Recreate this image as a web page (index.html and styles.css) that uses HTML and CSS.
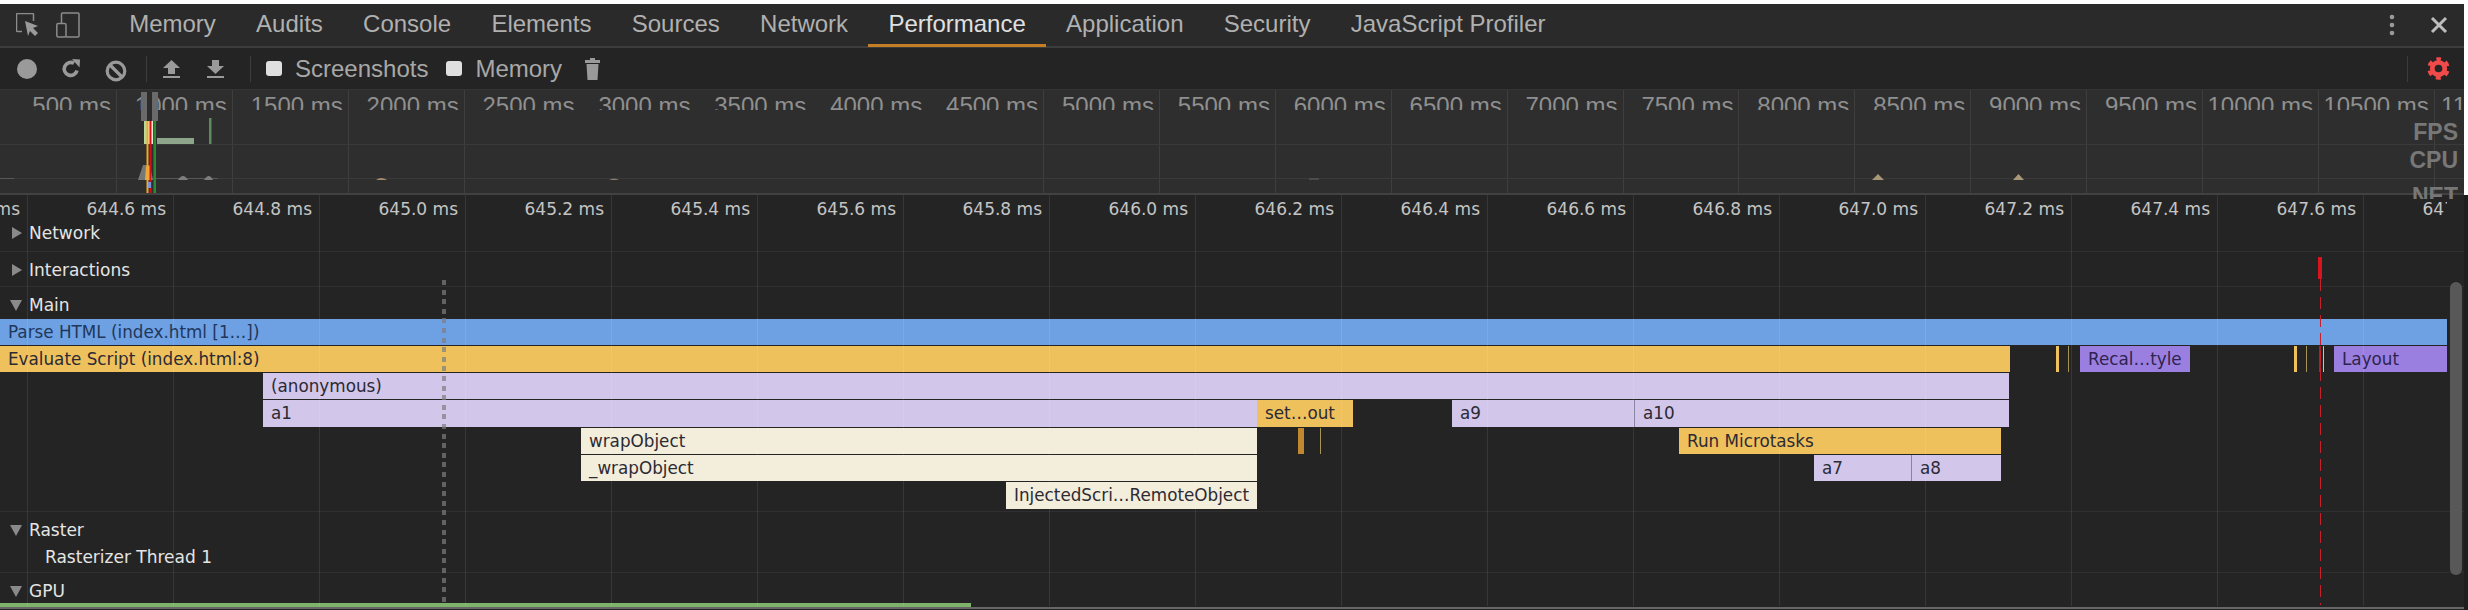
FILE: index.html
```html
<!DOCTYPE html>
<html lang="en">
<head>
    <meta charset="UTF-8">
    <title>DevTools Performance</title>
    <link rel="stylesheet" href="styles.css">
</head>
<body>
    <div class="tabbar">
        <svg class="icon-inspect" width="24" height="24" viewBox="0 0 24 24" fill="none" stroke="#8c8c8c" stroke-width="1.5">
            <path d="M6 18.5H1.5a1 1 0 0 1-1-1V1.5a1 1 0 0 1 1-1h15a1 1 0 0 1 1 1V8"></path>
            <path d="M9 8l13 5-5 2 5 5-3 3-5-5-2 5z" fill="#9a9a9a" stroke="none"></path>
        </svg>
        <svg class="icon-device" width="24" height="26" viewBox="0 0 24 26" fill="none" stroke="#8c8c8c" stroke-width="1.5">
            <path d="M5.5 11V2a1 1 0 0 1 1-1h15.500a1 1 0 0 1 1 1v22a1 1 0 0 1-1 1H10"></path>
            <rect x="0.8" y="11.500" width="9.200" height="13.500" rx="1.500"></rect>
        </svg>
        <div class="tab">Memory</div>
        <div class="tab">Audits</div>
        <div class="tab">Console</div>
        <div class="tab">Elements</div>
        <div class="tab">Sources</div>
        <div class="tab">Network</div>
        <div class="tab tab-active">Performance</div>
        <div class="tab">Application</div>
        <div class="tab">Security</div>
        <div class="tab">JavaScript Profiler</div>
        <svg class="icon-more" width="6" height="22" viewBox="0 0 6 22" fill="#9a9a9a">
            <circle cx="3" cy="3" r="2.300"></circle>
            <circle cx="3" cy="11" r="2.300"></circle>
            <circle cx="3" cy="19" r="2.300"></circle>
        </svg>
        <svg class="icon-close" width="18" height="18" viewBox="0 0 18 18" stroke="#bdbdbd" stroke-width="3">
            <line x1="2" y1="2" x2="16" y2="16"></line>
            <line x1="16" y1="2" x2="2" y2="16"></line>
        </svg>
    </div>

    <div class="toolbar">
        <svg class="btn-record" width="20" height="20" viewBox="0 0 20 20"><circle cx="10" cy="10" r="10" fill="#9a9a9a"></circle></svg>
        <svg class="btn-reload" width="20" height="20" viewBox="0 0 20 20" fill="none">
            <path d="M16 11.500A6.500 6.500 0 1 1 13 4.300" stroke="#9a9a9a" stroke-width="3.600"></path>
            <path d="M11 0l8 .5-.5 8z" fill="#9a9a9a"></path>
        </svg>
        <svg class="btn-clear" width="22" height="22" viewBox="0 0 22 22" fill="none" stroke="#9a9a9a" stroke-width="3.200">
            <circle cx="11" cy="11" r="8.800"></circle>
            <line x1="5" y1="5" x2="17" y2="17"></line>
        </svg>
        <div class="tool-sep sep-first"></div>
        <svg class="btn-load" width="17" height="18" viewBox="0 0 17 18" fill="#9a9a9a">
            <path d="M8.500 0L17 8h-5v6H5V8H0z"></path>
            <rect y="16" width="17" height="2"></rect>
        </svg>
        <svg class="btn-save" width="17" height="18" viewBox="0 0 17 18" fill="#9a9a9a">
            <path d="M8.500 14L17 6h-5V0H5v6H0z"></path>
            <rect y="16" width="17" height="2"></rect>
        </svg>
        <div class="tool-sep sep-second"></div>
        <span class="check check-first"></span>
        <span class="check-label">Screenshots</span>
        <span class="check check-second"></span>
        <span class="check-label">Memory</span>
        <svg class="btn-trash" width="15" height="22" viewBox="0 0 15 22" fill="#9a9a9a">
            <rect x="5" y="0" width="5" height="2"></rect>
            <rect x="0" y="2" width="15" height="3"></rect>
            <path d="M1.500 6h12L12.500 22h-10z"></path>
        </svg>
        <div class="tool-sep sep-right"></div>
        <svg class="btn-gear" width="23" height="23" viewBox="0 0 24 24" fill="none" stroke="#f04a4a">
            <circle cx="12" cy="12" r="6.500" stroke-width="5"></circle>
            <circle cx="12" cy="12" r="10" stroke-width="3.500" stroke-dasharray="5.200 5.270" stroke-dashoffset="2.600" transform="rotate(-90 12 12)"></circle>
        </svg>
    </div>

    <div class="overview">
        <div class="ov-grid">
            <div class="ov-div"><span class="ov-label">500 ms</span></div>
            <div class="ov-div"><span class="ov-label">1000 ms</span></div>
            <div class="ov-div"><span class="ov-label">1500 ms</span></div>
            <div class="ov-div"><span class="ov-label">2000 ms</span></div>
            <div class="ov-div no-line"><span class="ov-label">2500 ms</span></div>
            <div class="ov-div no-line"><span class="ov-label">3000 ms</span></div>
            <div class="ov-div no-line"><span class="ov-label">3500 ms</span></div>
            <div class="ov-div no-line"><span class="ov-label">4000 ms</span></div>
            <div class="ov-div"><span class="ov-label">4500 ms</span></div>
            <div class="ov-div"><span class="ov-label">5000 ms</span></div>
            <div class="ov-div"><span class="ov-label">5500 ms</span></div>
            <div class="ov-div"><span class="ov-label">6000 ms</span></div>
            <div class="ov-div"><span class="ov-label">6500 ms</span></div>
            <div class="ov-div"><span class="ov-label">7000 ms</span></div>
            <div class="ov-div"><span class="ov-label">7500 ms</span></div>
            <div class="ov-div"><span class="ov-label">8000 ms</span></div>
            <div class="ov-div"><span class="ov-label">8500 ms</span></div>
            <div class="ov-div"><span class="ov-label">9000 ms</span></div>
            <div class="ov-div"><span class="ov-label">9500 ms</span></div>
            <div class="ov-div"><span class="ov-label">10000 ms</span></div>
            <div class="ov-div"><span class="ov-label">10500 ms</span></div>
            <div class="ov-div"><span class="ov-label">11000 ms</span></div>
        </div>

        <!-- page coordinates, y starts at 90 -->
        <svg class="ov-chart" width="2464" height="105" viewBox="0 90 2464 105">
            <line x1="0" y1="144.500" x2="2464" y2="144.500" stroke="#3a3a3a"></line>
            <line x1="0" y1="178.500" x2="2464" y2="178.500" stroke="#3a3a3a"></line>

            <rect x="157" y="138" width="37" height="6" fill="#8da58a"></rect>
            <rect x="209" y="118" width="2.500" height="26" fill="#5e8a5e"></rect>
            <rect x="144" y="121" width="3" height="23" fill="#b8d89a"></rect>
            <rect x="148" y="121" width="5" height="23" fill="#efe9d8"></rect>

            <path d="M138 180L143 165h7l3 15z" fill="#777"></path>
            <path d="M145 180l1-14h4l2 14z" fill="#e9a94a"></path>
            <path d="M0 178.500h14M153 178.500h65" stroke="#585858"></path>
            <path d="M178 180q5-8 10 0zM204 180q5-8 9 0z" fill="#7d7d7d"></path>
            <path d="M376 180q5-4 11 0z" fill="#a58c6c"></path>
            <path d="M609 180q5-3 10 0z" fill="#8b7d6c"></path>
            <path d="M1309 179h10" stroke="#555" stroke-width="1.500"></path>
            <path d="M1872 180l6-6 6 6zM2013 180l5.500-6 5.500 6z" fill="#a89878"></path>

            <rect x="146.500" y="121" width="2" height="72" fill="#f5a623"></rect>
            <rect x="149.500" y="121" width="2" height="72" fill="#d0101b"></rect>
            <rect x="153.500" y="121" width="2.500" height="72" fill="#2c8a34"></rect>
            <rect x="148" y="182" width="3" height="6" fill="#7d93d8"></rect>

            <rect x="141" y="92" width="6" height="29" fill="#6a6a6a"></rect>
            <rect x="147" y="92" width="5" height="29" fill="#2c2c2c"></rect>
            <rect x="152" y="92" width="6" height="29" fill="#6a6a6a"></rect>
        </svg>

        <div class="ov-legend">
            <div class="legend-fps">FPS</div>
            <div class="legend-cpu">CPU</div>
            <div class="legend-net">NET</div>
        </div>
    </div>

    <div class="timeline">
        <div class="track track-network"><span class="arrow-right"></span>Network</div>
        <div class="track track-interactions"><span class="arrow-right"></span>Interactions</div>
        <div class="track track-main"><span class="arrow-down"></span>Main</div>

        <div class="flame-row">
            <div class="bar bar-blue" style="left:0;width:2447px">Parse HTML (index.html [1…])</div>
        </div>
        <div class="flame-row">
            <div class="bar bar-yellow" style="left:0;width:2010px">Evaluate Script (index.html:8)</div>
            <div class="bar bar-yellow" style="left:2056px;width:3px"></div>
            <div class="bar bar-tick" style="left:2068px;width:1px"></div>
            <div class="bar bar-violet" style="left:2080px;width:110px">Recal…tyle</div>
            <div class="bar bar-yellow" style="left:2294px;width:3px"></div>
            <div class="bar bar-tick" style="left:2306px;width:1px"></div>
            <div class="bar bar-red" style="left:2319px;width:2px"></div>
            <div class="bar bar-yellow" style="left:2323px;width:1px"></div>
            <div class="bar bar-violet" style="left:2334px;width:113px">Layout</div>
        </div>
        <div class="flame-row">
            <div class="bar bar-lilac" style="left:263px;width:1746px">(anonymous)</div>
        </div>
        <div class="flame-row">
            <div class="bar bar-lilac" style="left:263px;width:994px">a1</div>
            <div class="bar bar-yellow" style="left:1257px;width:96px">set…out</div>
            <div class="bar bar-lilac" style="left:1452px;width:182px">a9</div>
            <div class="bar bar-lilac bar-split" style="left:1634px;width:375px">a10</div>
        </div>
        <div class="flame-row">
            <div class="bar bar-cream" style="left:581px;width:676px">wrapObject</div>
            <div class="bar bar-dim" style="left:1298px;width:6px"></div>
            <div class="bar bar-tick" style="left:1320px;width:1px"></div>
            <div class="bar bar-yellow" style="left:1679px;width:322px">Run Microtasks</div>
        </div>
        <div class="flame-row">
            <div class="bar bar-cream" style="left:581px;width:676px">_wrapObject</div>
            <div class="bar bar-lilac" style="left:1814px;width:97px">a7</div>
            <div class="bar bar-lilac bar-split" style="left:1911px;width:90px">a8</div>
        </div>
        <div class="flame-row">
            <div class="bar bar-cream" style="left:1006px;width:251px">InjectedScri…RemoteObject</div>
        </div>

        <div class="track track-raster"><span class="arrow-down"></span>Raster</div>
        <div class="track track-thread">Rasterizer Thread 1</div>
        <div class="track track-gpu"><span class="arrow-down"></span>GPU</div>
        <div class="gpu-bar"></div>
        <div class="bottom-line"></div>

        <div class="ruler">
            <div class="tick">644.4 ms</div>
            <div class="tick">644.6 ms</div>
            <div class="tick">644.8 ms</div>
            <div class="tick">645.0 ms</div>
            <div class="tick">645.2 ms</div>
            <div class="tick">645.4 ms</div>
            <div class="tick">645.6 ms</div>
            <div class="tick">645.8 ms</div>
            <div class="tick">646.0 ms</div>
            <div class="tick">646.2 ms</div>
            <div class="tick">646.4 ms</div>
            <div class="tick">646.6 ms</div>
            <div class="tick">646.8 ms</div>
            <div class="tick">647.0 ms</div>
            <div class="tick">647.2 ms</div>
            <div class="tick">647.4 ms</div>
            <div class="tick">647.6 ms</div>
            <div class="tick">647.8 ms</div>
        </div>

        <div class="dotted-marker"></div>
        <div class="red-cap"></div>
        <div class="red-marker"></div>
        <div class="scroll-thumb"></div>
    </div>
</body>
</html>
```

FILE: styles.css
```css
html, body {
    margin: 0;
    padding: 0;
    background: #fff;
    overflow: hidden;
}

body {
    height: 610px;
    padding-top: 4px;
    box-sizing: border-box;
    font-family: "Liberation Sans", Arial, sans-serif;
}

/* top tab strip */
.tabbar {
    width: 2464px;
    height: 44px;
    box-sizing: border-box;
    background: #2a2a2a;
    border-bottom: 2px solid #3d3d3d;
    display: flex;
    align-items: center;
    font-size: 24px;
    color: #b0b0b0;
}

.icon-inspect {
    margin-left: 16px;
    flex-shrink: 0;
}

.icon-device {
    margin-left: 16px;
    margin-right: 29px;
    flex-shrink: 0;
}

.tab {
    height: 44px;
    box-sizing: border-box;
    padding: 0 20.15px;
    line-height: 42px;
    white-space: nowrap;
}

.tab-active {
    color: #e0e0e0;
    border-bottom: 3px solid #c47f26;
}

.icon-more {
    margin-left: auto;
    margin-right: 35px;
}

.icon-close {
    margin-right: 16px;
}

/* record / load / options toolbar */
.toolbar {
    width: 2464px;
    height: 42px;
    box-sizing: border-box;
    background: #242424;
    display: flex;
    align-items: center;
    font-size: 24px;
    color: #a8a8a8;
    border-bottom: 1px solid #333;
}

.btn-record { margin-left: 17px; }
.btn-reload { margin-left: 24px; }
.btn-clear { margin-left: 24px; margin-top: 4px; }
.btn-load { margin-left: 16px; }
.btn-save { margin-left: 27px; }
.btn-trash { margin-left: 23px; }

.tool-sep {
    width: 1px;
    height: 26px;
    background: #3c3c3c;
}

.sep-first { margin-left: 19px; }
.sep-second { margin-left: 26px; }
.sep-right { margin-left: auto; }

.btn-gear {
    margin-left: 19px;
    margin-right: 14px;
}

.check {
    width: 16px;
    height: 15px;
    border-radius: 3px;
    background: #dfdfdf;
}

.check-first { margin-left: 15px; }
.check-second { margin-left: 18px; }

.check-label {
    margin-left: 13px;
    white-space: nowrap;
}

/* overview strip */
.overview {
    position: relative;
    z-index: 2;
    width: 2464px;
    height: 105px;
    box-sizing: border-box;
    background: #2e2e2e;
    border-bottom: 2px solid #414141;
}

.ov-grid {
    display: flex;
    height: 103px;
    padding-left: 1.1px;
    overflow: hidden;
}

.ov-div {
    flex: 0 0 115.9px;
    box-sizing: border-box;
    height: 103px;
    border-right: 1px solid #3e3e3e;
    padding-right: 5px;
    text-align: right;
}

.no-line {
    border-right-color: transparent;
}

.ov-label {
    display: block;
    height: 20px;
    overflow: hidden;
    font-size: 24px;
    line-height: 31px;
    color: #8f8f8f;
    white-space: nowrap;
}

.ov-chart {
    position: absolute;
    top: 0;
    left: 0;
}

.ov-legend {
    position: absolute;
    top: 28px;
    right: 6px;
    height: 81px;
    overflow: hidden;
    text-align: right;
    font-size: 23px;
    font-weight: bold;
    line-height: 28px;
    color: #777;
}

.legend-net {
    margin-top: 8px;
}

/* flame chart area */
.timeline {
    position: relative;
    width: 2468px;
    height: 415px;
    box-sizing: border-box;
    background: #242424;
    border-right: 4px solid #1e1e1e;
    overflow: hidden;
    font-family: "DejaVu Sans", sans-serif;
    font-size: 17px;
    color: #e4e4e4;
}

.track {
    box-sizing: border-box;
    display: flex;
    align-items: flex-start;
    padding-left: 12px;
    line-height: 18px;
    white-space: nowrap;
}

.track-network {
    margin-top: 29px;
    height: 28px;
    border-bottom: 1px solid #2f2f2f;
}

.track-interactions {
    height: 35px;
    padding-top: 9px;
    border-bottom: 1px solid #2f2f2f;
}

.track-main {
    height: 31.5px;
    padding-top: 9px;
}

.track-raster {
    height: 31px;
    margin-top: 1px;
    border-top: 1px solid #2f2f2f;
    padding-top: 9px;
}

.track-thread {
    height: 31px;
    padding-left: 45px;
    padding-top: 6px;
    border-bottom: 1px solid #2f2f2f;
}

.track-gpu {
    height: 30px;
    padding-top: 9px;
}

.arrow-right {
    width: 0;
    height: 0;
    margin: 3px 7px 0 0;
    border-left: 10px solid #8a8a8a;
    border-top: 6px solid transparent;
    border-bottom: 6px solid transparent;
}

.arrow-down {
    width: 0;
    height: 0;
    margin: 4px 7px 0 -2px;
    border-top: 11px solid #8a8a8a;
    border-left: 6px solid transparent;
    border-right: 6px solid transparent;
}

.flame-row {
    position: relative;
    height: 27.3px;
}

.bar {
    position: absolute;
    top: 0;
    height: 26.3px;
    box-sizing: border-box;
    padding-left: 8px;
    line-height: 26px;
    font-size: 16.8px;
    color: #2c2a33;
    white-space: nowrap;
    overflow: hidden;
}

.bar-blue { background: #6ea1e3; color: #22375a; }
.bar-yellow { background: #efc15d; }
.bar-lilac { background: #d2c6ea; }
.bar-cream { background: #f3eddc; }
.bar-violet { background: #9b7fe0; color: #2e2450; }
.bar-dim { background: #c08830; padding: 0; }
.bar-tick { background: #a89458; padding: 0; }
.bar-red { background: #a8232a; padding: 0; }
.bar-yellow:empty { padding: 0; }

.bar-split {
    border-left: 1px solid #8d84a3;
}

.gpu-bar {
    width: 971px;
    height: 4px;
    background: #7fb36c;
}

.bottom-line {
    height: 2px;
    background: #666;
}

/* time ruler and its grid lie over the tracks, cut where the chart ends */
.ruler {
    position: absolute;
    top: 0;
    left: -118px;
    width: 2565px;
    height: 411px;
    display: flex;
    overflow: hidden;
    pointer-events: none;
}

.tick {
    flex: 0 0 146px;
    box-sizing: border-box;
    height: 411px;
    padding: 4px 7px 0 0;
    border-right: 1px solid rgba(255, 255, 255, 0.09);
    text-align: right;
    line-height: 20px;
    color: #c4c4c4;
    white-space: nowrap;
}

.dotted-marker {
    position: absolute;
    top: 85px;
    left: 442px;
    width: 4px;
    height: 325px;
    background: repeating-linear-gradient(to bottom, rgba(125, 125, 125, 0.7) 0 5px, transparent 5px 9.6px);
}

.red-cap {
    position: absolute;
    top: 62px;
    left: 2318px;
    width: 4px;
    height: 22px;
    background: #d8141f;
}

.red-marker {
    position: absolute;
    top: 84px;
    left: 2320px;
    width: 1px;
    height: 326px;
    background: repeating-linear-gradient(to bottom, #c8202a 0 12px, transparent 12px 18px);
}

.scroll-thumb {
    position: absolute;
    top: 87px;
    left: 2450px;
    width: 12px;
    height: 293px;
    border-radius: 6px;
    background: #585858;
}
```
